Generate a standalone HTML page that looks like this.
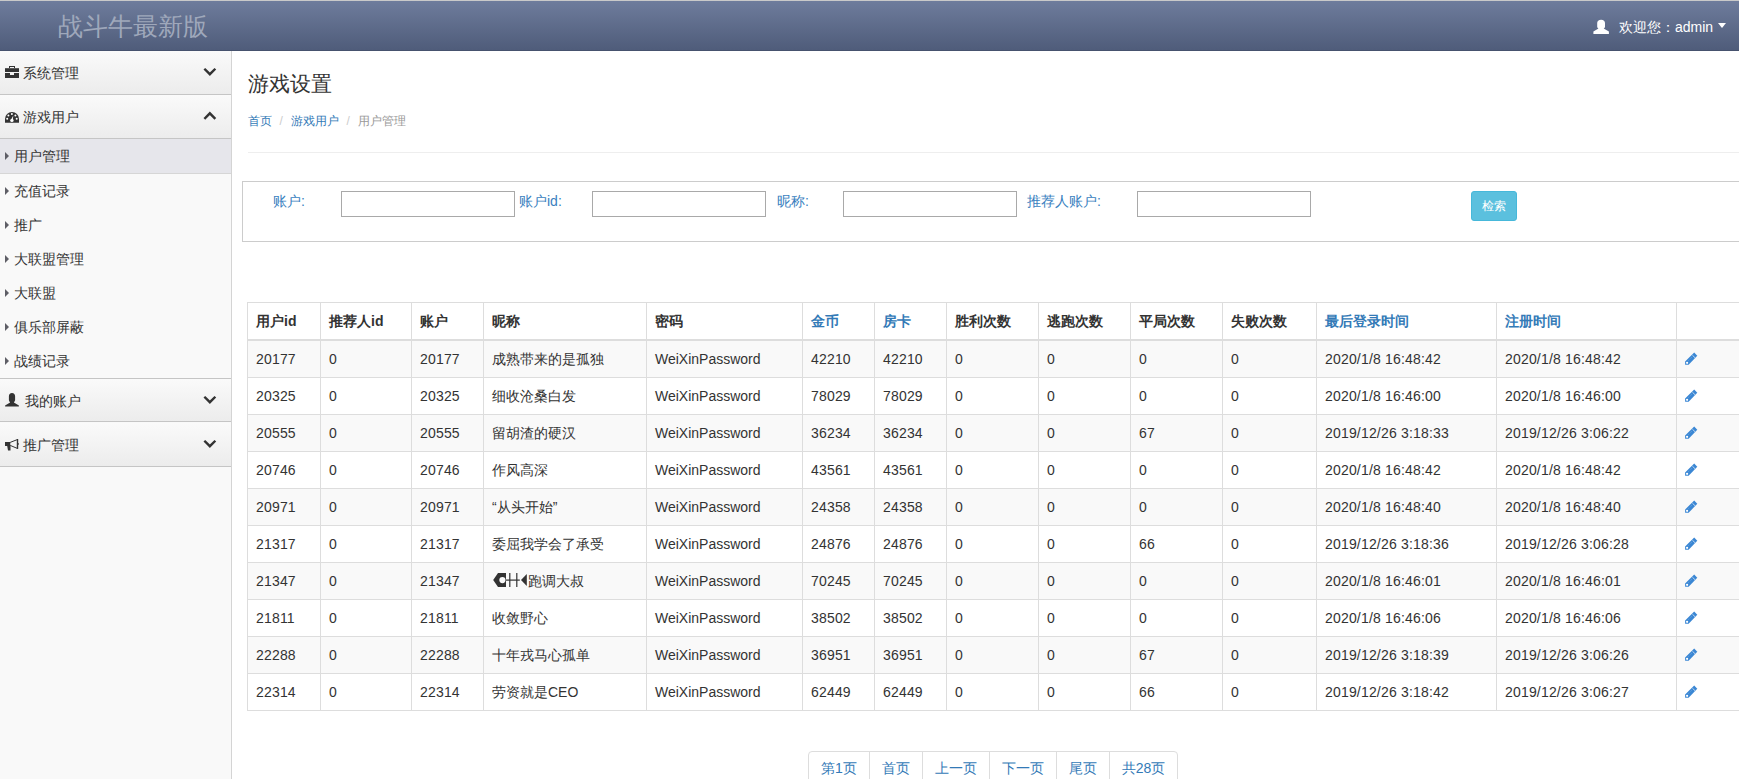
<!DOCTYPE html><html><head><meta charset="utf-8"><style>
*{box-sizing:border-box;margin:0;padding:0}
html,body{width:1739px;height:779px;overflow:hidden;background:#fff;font-family:"Liberation Sans",sans-serif;font-size:14px;color:#333;line-height:20px}
#hdr{position:absolute;left:0;top:0;width:1739px;height:51px;border-top:1px solid #c9c9c9;background:linear-gradient(#6e7c9c,#4f5c7a);border-bottom:1px solid #46526e}
#logo{position:absolute;left:58px;top:10px;font-size:25px;line-height:30px;color:#9fa8bb}
#uico{position:absolute;left:1593px;top:18px}
#user{position:absolute;left:1619px;top:16px;color:#fff;font-size:14px;line-height:20px;white-space:nowrap}
#caret{position:absolute;left:1718px;top:22px;width:0;height:0;border-top:5px solid #fff;border-left:4.5px solid transparent;border-right:4.5px solid transparent}
#side{position:absolute;left:0;top:51px;width:232px;height:728px;background:#f9f9f9;border-right:1px solid #d4d4d4}
.sh{position:absolute;left:0;width:231px;height:44px;background:linear-gradient(#fafafa,#ececec);border-bottom:1px solid #c5c5c5;color:#333}
.sh .t{position:absolute;left:23px;top:12px}
.sh .chev{position:absolute;left:198px;top:11px}
.sh .ico{position:absolute;left:0;top:9px}
.si{position:absolute;left:0;width:231px;height:34px;color:#333}
.si .t{position:absolute;left:14px;top:7px}
.si .ar{position:absolute;left:5px;top:13px;width:0;height:0;border-left:4.6px solid #5e5e66;border-top:4px solid transparent;border-bottom:4px solid transparent}
.si.act{background:#e6e6eb;border-bottom:1px solid #d6d6d6;height:35px}
#main{position:absolute;left:232px;top:51px;width:1507px;height:728px}
h1{position:absolute;left:16px;top:20px;font-size:21px;font-weight:normal;line-height:26px;color:#333}
#crumb{position:absolute;left:16px;top:60px;font-size:12px;color:#999;white-space:nowrap}
#crumb a{color:#337ab7;text-decoration:none}
#crumb .sep{color:#ccc;padding:0 8px 0 7.6px}
#hr{position:absolute;left:16px;top:101px;width:1491px;height:1px;background:#eee}
#search{position:absolute;left:10px;top:130px;width:1500px;height:61px;border:1px solid #ccc;border-right:none}
.lbl{position:absolute;top:9px;color:#3a7fc0;font-size:14px}
.inp{position:absolute;top:9px;width:174px;height:26px;border:1px solid #a9a9a9;background:#fff}
#btn{position:absolute;left:1228px;top:9px;width:46px;height:30px;background:#5bc0de;border:1px solid #46b8da;border-radius:3px;color:#fff;font-size:12px;text-align:center;line-height:28px}
table{position:absolute;left:15px;top:251px;border-collapse:collapse;table-layout:fixed;width:1549px}
td,th{border:1px solid #ddd;padding:8px;text-align:left;white-space:nowrap;overflow:hidden;height:37px;font-size:14px;line-height:20px}
th{font-weight:bold;border-bottom:2px solid #ddd;height:37px}
th.lnk{color:#337ab7}
tbody tr:nth-child(odd){background:#f9f9f9}
td.n{letter-spacing:0.18px}
#pg{position:absolute;left:576px;top:700px;height:34px;border:1px solid #ddd;border-radius:4px;display:flex}
#pg span{display:block;padding:6px 12px;color:#337ab7;border-left:1px solid #ddd;font-size:14px;line-height:20px}
#pg span:first-child{border-left:none}
td.pc{position:relative}
.pen{position:absolute;left:3px;top:7px}
.spc{vertical-align:top}
</style></head><body>
<div id="hdr"><div id="logo">战斗牛最新版</div><svg id="uico" width="17" height="16" viewBox="0 0 17 16"><path d="M8.1 0.7 C5.6 0.7 4.2 2 4.2 4 L4.2 7.8 C4.2 8.6 4.8 9.2 5.5 9.6 L0.4 12.6 L0.4 15 L15.9 15 L15.9 12.6 L10.7 9.6 C11.4 9.2 12 8.6 12 7.8 L12 4 C12 2 10.6 0.7 8.1 0.7 Z" fill="#fff"/></svg><div id="user">欢迎您：admin</div><div id="caret"></div></div>
<div id="side">
<div class="sh" style="top:0"><svg class="ico" width="24" height="24" viewBox="0 0 24 24"><path d="M9 6 H15 V8 H14 V7 H10 V8 H9 Z" fill="#333"/><rect x="5" y="8.2" width="14" height="3.8" fill="#333"/><path d="M5 13 H10 V15 H14 V13 H19 V18 H5 Z" fill="#333"/></svg><span class="t">系统管理</span><svg class="chev" width="24" height="24" viewBox="0 0 24 24"><path d="M7.2 7.6 L11.85 12.2 L16.5 7.6" fill="none" stroke="#333" stroke-width="2.4" stroke-linecap="square"/></svg></div>
<div class="sh" style="top:44px"><svg class="ico" width="24" height="24" viewBox="0 0 24 24"><path d="M5 18.8 L5 15 A7 7 0 0 1 19 15 L19 18.8 Z" fill="#333"/><circle cx="7.2" cy="14.8" r="1" fill="#fff"/><circle cx="8.4" cy="11.4" r="1" fill="#fff"/><circle cx="11.9" cy="10" r="1" fill="#fff"/><circle cx="15.4" cy="11.4" r="1" fill="#fff"/><circle cx="16.7" cy="14.8" r="1" fill="#fff"/><circle cx="11.9" cy="16.4" r="1.7" fill="#fff"/><path d="M11.1 15.8 L13.3 11.4 L12.7 16.2 Z" fill="#fff"/></svg><span class="t">游戏用户</span><svg class="chev" width="24" height="24" viewBox="0 0 24 24"><path d="M7.2 12 L11.85 7.3 L16.5 12" fill="none" stroke="#333" stroke-width="2.4" stroke-linecap="square"/></svg></div>
<div class="si act" style="top:88px"><span class="ar"></span><span class="t">用户管理</span></div>
<div class="si" style="top:123px"><span class="ar"></span><span class="t">充值记录</span></div>
<div class="si" style="top:157px"><span class="ar"></span><span class="t">推广</span></div>
<div class="si" style="top:191px"><span class="ar"></span><span class="t">大联盟管理</span></div>
<div class="si" style="top:225px"><span class="ar"></span><span class="t">大联盟</span></div>
<div class="si" style="top:259px"><span class="ar"></span><span class="t">俱乐部屏蔽</span></div>
<div class="si" style="top:293px"><span class="ar"></span><span class="t">战绩记录</span></div>
<div class="sh" style="top:327px;border-top:1px solid #c5c5c5"><svg class="ico" width="24" height="24" viewBox="0 0 24 24"><path d="M12 4.9 C10 4.9 8.9 6.3 8.9 8.2 L8.9 12 C8.9 12.8 9.6 13.6 10.1 14.5 L5.1 17.4 L5.1 18.5 L18.9 18.5 L18.9 17.4 L13.9 14.5 C14.4 13.6 15.1 12.8 15.1 12 L15.1 8.2 C15.1 6.3 14 4.9 12 4.9 Z" fill="#333"/></svg><span class="t" style="left:25px">我的账户</span><svg class="chev" width="24" height="24" viewBox="0 0 24 24"><path d="M7.2 7.6 L11.85 12.2 L16.5 7.6" fill="none" stroke="#333" stroke-width="2.4" stroke-linecap="square"/></svg></div>
<div class="sh" style="top:372px"><svg class="ico" width="24" height="24" viewBox="0 0 24 24"><path d="M5 9.9 H10.3 V13.9 H5 Z M7.2 13.9 H10.5 V18.5 H8 Z" fill="#333"/><path d="M10.2 10.4 L17.3 7.6 L17.3 16.4 L10.2 13.4" fill="none" stroke="#333" stroke-width="1"/><rect x="17" y="7" width="1.2" height="9.9" fill="#333"/><rect x="18" y="11.2" width="0.8" height="1.5" fill="#333"/></svg><span class="t">推广管理</span><svg class="chev" width="24" height="24" viewBox="0 0 24 24"><path d="M7.2 7.6 L11.85 12.2 L16.5 7.6" fill="none" stroke="#333" stroke-width="2.4" stroke-linecap="square"/></svg></div>
</div>
<div id="main"><h1>游戏设置</h1>
<div id="crumb"><a>首页</a><span class="sep">/</span><a>游戏用户</a><span class="sep">/</span>用户管理</div><div id="hr"></div>
<div id="search">
<span class="lbl" style="left:30px">账户:</span><div class="inp" style="left:98px"></div>
<span class="lbl" style="left:276px">账户id:</span><div class="inp" style="left:349px"></div>
<span class="lbl" style="left:534px">昵称:</span><div class="inp" style="left:600px"></div>
<span class="lbl" style="left:784px">推荐人账户:</span><div class="inp" style="left:894px"></div>
<div id="btn">检索</div></div>
<table><colgroup><col style="width:73px"><col style="width:91px"><col style="width:72px"><col style="width:163px"><col style="width:156px"><col style="width:72px"><col style="width:72px"><col style="width:92px"><col style="width:92px"><col style="width:92px"><col style="width:94px"><col style="width:180px"><col style="width:180px"><col style="width:120px"></colgroup><thead><tr><th>用户id</th><th>推荐人id</th><th>账户</th><th>昵称</th><th>密码</th><th class=lnk>金币</th><th class=lnk>房卡</th><th>胜利次数</th><th>逃跑次数</th><th>平局次数</th><th>失败次数</th><th class=lnk>最后登录时间</th><th class=lnk>注册时间</th><th></th></tr></thead><tbody><tr><td class="n">20177</td><td class="n">0</td><td class="n">20177</td><td>成熟带来的是孤独</td><td>WeiXinPassword</td><td class="n">42210</td><td class="n">42210</td><td class="n">0</td><td class="n">0</td><td class="n">0</td><td class="n">0</td><td class="n">2020/1/8 16:48:42</td><td class="n">2020/1/8 16:48:42</td><td class="pc"><svg class="pen" width="24" height="24" viewBox="0 0 24 24"><path d="M5.1 13.4 L14.2 4.6 L17.3 7.8 L8.6 16.8 L5.1 16.8 Z" fill="#3b87d4"/><path d="M12.4 7.2 L15.2 9.9" stroke="#dfeaf6" stroke-width="0.8"/><path d="M8.3 12.6 L11.8 9.2" stroke="#8fb8e4" stroke-width="0.6" stroke-dasharray="1 1"/><circle cx="7.1" cy="14.8" r="1.1" fill="#fff"/></svg></td></tr><tr><td class="n">20325</td><td class="n">0</td><td class="n">20325</td><td>细收沧桑白发</td><td>WeiXinPassword</td><td class="n">78029</td><td class="n">78029</td><td class="n">0</td><td class="n">0</td><td class="n">0</td><td class="n">0</td><td class="n">2020/1/8 16:46:00</td><td class="n">2020/1/8 16:46:00</td><td class="pc"><svg class="pen" width="24" height="24" viewBox="0 0 24 24"><path d="M5.1 13.4 L14.2 4.6 L17.3 7.8 L8.6 16.8 L5.1 16.8 Z" fill="#3b87d4"/><path d="M12.4 7.2 L15.2 9.9" stroke="#dfeaf6" stroke-width="0.8"/><path d="M8.3 12.6 L11.8 9.2" stroke="#8fb8e4" stroke-width="0.6" stroke-dasharray="1 1"/><circle cx="7.1" cy="14.8" r="1.1" fill="#fff"/></svg></td></tr><tr><td class="n">20555</td><td class="n">0</td><td class="n">20555</td><td>留胡渣的硬汉</td><td>WeiXinPassword</td><td class="n">36234</td><td class="n">36234</td><td class="n">0</td><td class="n">0</td><td class="n">67</td><td class="n">0</td><td class="n">2019/12/26 3:18:33</td><td class="n">2019/12/26 3:06:22</td><td class="pc"><svg class="pen" width="24" height="24" viewBox="0 0 24 24"><path d="M5.1 13.4 L14.2 4.6 L17.3 7.8 L8.6 16.8 L5.1 16.8 Z" fill="#3b87d4"/><path d="M12.4 7.2 L15.2 9.9" stroke="#dfeaf6" stroke-width="0.8"/><path d="M8.3 12.6 L11.8 9.2" stroke="#8fb8e4" stroke-width="0.6" stroke-dasharray="1 1"/><circle cx="7.1" cy="14.8" r="1.1" fill="#fff"/></svg></td></tr><tr><td class="n">20746</td><td class="n">0</td><td class="n">20746</td><td>作风高深</td><td>WeiXinPassword</td><td class="n">43561</td><td class="n">43561</td><td class="n">0</td><td class="n">0</td><td class="n">0</td><td class="n">0</td><td class="n">2020/1/8 16:48:42</td><td class="n">2020/1/8 16:48:42</td><td class="pc"><svg class="pen" width="24" height="24" viewBox="0 0 24 24"><path d="M5.1 13.4 L14.2 4.6 L17.3 7.8 L8.6 16.8 L5.1 16.8 Z" fill="#3b87d4"/><path d="M12.4 7.2 L15.2 9.9" stroke="#dfeaf6" stroke-width="0.8"/><path d="M8.3 12.6 L11.8 9.2" stroke="#8fb8e4" stroke-width="0.6" stroke-dasharray="1 1"/><circle cx="7.1" cy="14.8" r="1.1" fill="#fff"/></svg></td></tr><tr><td class="n">20971</td><td class="n">0</td><td class="n">20971</td><td>“从头开始”</td><td>WeiXinPassword</td><td class="n">24358</td><td class="n">24358</td><td class="n">0</td><td class="n">0</td><td class="n">0</td><td class="n">0</td><td class="n">2020/1/8 16:48:40</td><td class="n">2020/1/8 16:48:40</td><td class="pc"><svg class="pen" width="24" height="24" viewBox="0 0 24 24"><path d="M5.1 13.4 L14.2 4.6 L17.3 7.8 L8.6 16.8 L5.1 16.8 Z" fill="#3b87d4"/><path d="M12.4 7.2 L15.2 9.9" stroke="#dfeaf6" stroke-width="0.8"/><path d="M8.3 12.6 L11.8 9.2" stroke="#8fb8e4" stroke-width="0.6" stroke-dasharray="1 1"/><circle cx="7.1" cy="14.8" r="1.1" fill="#fff"/></svg></td></tr><tr><td class="n">21317</td><td class="n">0</td><td class="n">21317</td><td>委屈我学会了承受</td><td>WeiXinPassword</td><td class="n">24876</td><td class="n">24876</td><td class="n">0</td><td class="n">0</td><td class="n">66</td><td class="n">0</td><td class="n">2019/12/26 3:18:36</td><td class="n">2019/12/26 3:06:28</td><td class="pc"><svg class="pen" width="24" height="24" viewBox="0 0 24 24"><path d="M5.1 13.4 L14.2 4.6 L17.3 7.8 L8.6 16.8 L5.1 16.8 Z" fill="#3b87d4"/><path d="M12.4 7.2 L15.2 9.9" stroke="#dfeaf6" stroke-width="0.8"/><path d="M8.3 12.6 L11.8 9.2" stroke="#8fb8e4" stroke-width="0.6" stroke-dasharray="1 1"/><circle cx="7.1" cy="14.8" r="1.1" fill="#fff"/></svg></td></tr><tr><td class="n">21347</td><td class="n">0</td><td class="n">21347</td><td><svg class="spc" width="36" height="20" viewBox="0 0 36 20"><g transform="translate(1.2,2)"><path d="M0 7.1 L4.8 0 L12.8 0 L12.8 14 L4.8 14 Z" fill="#333"/><circle cx="9.2" cy="7.1" r="3.1" fill="#f9f9f9"/><rect x="12.8" y="6.5" width="13.8" height="1.2" fill="#333"/><rect x="16" y="0" width="1.2" height="14" fill="#333"/><rect x="23" y="0" width="1.2" height="14" fill="#333"/><path d="M27.8 7.1 L33.6 1 L33.6 13 Z" fill="#333"/></g></svg>跑调大叔</td><td>WeiXinPassword</td><td class="n">70245</td><td class="n">70245</td><td class="n">0</td><td class="n">0</td><td class="n">0</td><td class="n">0</td><td class="n">2020/1/8 16:46:01</td><td class="n">2020/1/8 16:46:01</td><td class="pc"><svg class="pen" width="24" height="24" viewBox="0 0 24 24"><path d="M5.1 13.4 L14.2 4.6 L17.3 7.8 L8.6 16.8 L5.1 16.8 Z" fill="#3b87d4"/><path d="M12.4 7.2 L15.2 9.9" stroke="#dfeaf6" stroke-width="0.8"/><path d="M8.3 12.6 L11.8 9.2" stroke="#8fb8e4" stroke-width="0.6" stroke-dasharray="1 1"/><circle cx="7.1" cy="14.8" r="1.1" fill="#fff"/></svg></td></tr><tr><td class="n">21811</td><td class="n">0</td><td class="n">21811</td><td>收敛野心</td><td>WeiXinPassword</td><td class="n">38502</td><td class="n">38502</td><td class="n">0</td><td class="n">0</td><td class="n">0</td><td class="n">0</td><td class="n">2020/1/8 16:46:06</td><td class="n">2020/1/8 16:46:06</td><td class="pc"><svg class="pen" width="24" height="24" viewBox="0 0 24 24"><path d="M5.1 13.4 L14.2 4.6 L17.3 7.8 L8.6 16.8 L5.1 16.8 Z" fill="#3b87d4"/><path d="M12.4 7.2 L15.2 9.9" stroke="#dfeaf6" stroke-width="0.8"/><path d="M8.3 12.6 L11.8 9.2" stroke="#8fb8e4" stroke-width="0.6" stroke-dasharray="1 1"/><circle cx="7.1" cy="14.8" r="1.1" fill="#fff"/></svg></td></tr><tr><td class="n">22288</td><td class="n">0</td><td class="n">22288</td><td>十年戎马心孤单</td><td>WeiXinPassword</td><td class="n">36951</td><td class="n">36951</td><td class="n">0</td><td class="n">0</td><td class="n">67</td><td class="n">0</td><td class="n">2019/12/26 3:18:39</td><td class="n">2019/12/26 3:06:26</td><td class="pc"><svg class="pen" width="24" height="24" viewBox="0 0 24 24"><path d="M5.1 13.4 L14.2 4.6 L17.3 7.8 L8.6 16.8 L5.1 16.8 Z" fill="#3b87d4"/><path d="M12.4 7.2 L15.2 9.9" stroke="#dfeaf6" stroke-width="0.8"/><path d="M8.3 12.6 L11.8 9.2" stroke="#8fb8e4" stroke-width="0.6" stroke-dasharray="1 1"/><circle cx="7.1" cy="14.8" r="1.1" fill="#fff"/></svg></td></tr><tr><td class="n">22314</td><td class="n">0</td><td class="n">22314</td><td>劳资就是CEO</td><td>WeiXinPassword</td><td class="n">62449</td><td class="n">62449</td><td class="n">0</td><td class="n">0</td><td class="n">66</td><td class="n">0</td><td class="n">2019/12/26 3:18:42</td><td class="n">2019/12/26 3:06:27</td><td class="pc"><svg class="pen" width="24" height="24" viewBox="0 0 24 24"><path d="M5.1 13.4 L14.2 4.6 L17.3 7.8 L8.6 16.8 L5.1 16.8 Z" fill="#3b87d4"/><path d="M12.4 7.2 L15.2 9.9" stroke="#dfeaf6" stroke-width="0.8"/><path d="M8.3 12.6 L11.8 9.2" stroke="#8fb8e4" stroke-width="0.6" stroke-dasharray="1 1"/><circle cx="7.1" cy="14.8" r="1.1" fill="#fff"/></svg></td></tr></tbody></table><div id="pg"><span>第1页</span><span>首页</span><span>上一页</span><span>下一页</span><span>尾页</span><span>共28页</span></div>
</div></body></html>
